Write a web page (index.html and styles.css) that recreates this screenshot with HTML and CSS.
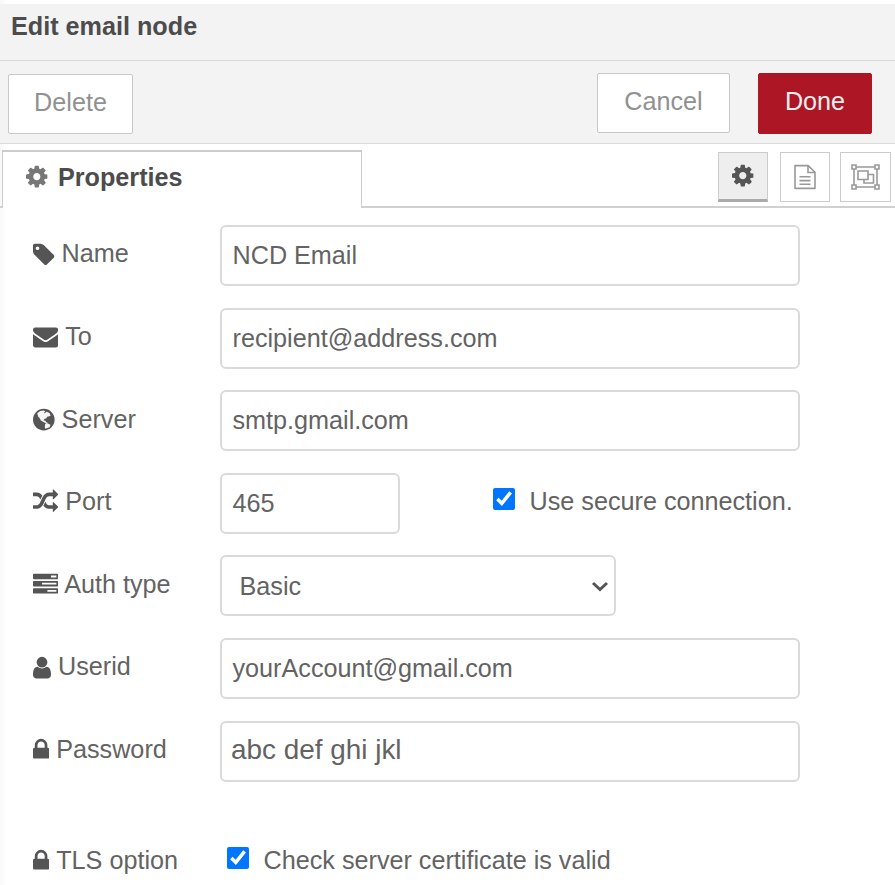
FILE: index.html
```html
<!DOCTYPE html>
<html lang="en">
<head>
<meta charset="utf-8">
<title>Edit email node</title>
<link rel="stylesheet" href="styles.css">
</head>
<body>
<svg class="defs" width="0" height="0">
  <symbol id="cog" viewBox="128 0 1536 1792"><path d="M1152 896q0-106-75-181t-181-75-181 75-75 181 75 181 181 75 181-75 75-181zm512-109v222q0 12-8 23t-20 13l-185 28q-19 54-39 91 35 50 107 138 10 12 10 25t-9 23q-27 37-99 108t-94 71q-12 0-26-9l-138-108q-44 23-91 38-16 136-29 186-7 28-36 28h-222q-14 0-24.500-8.500t-11.500-21.500l-28-184q-49-16-90-37l-141 107q-10 9-25 9-14 0-25-11-126-114-165-168-7-10-7-23 0-12 8-23 15-21 51-66.500t54-70.500q-27-50-41-99l-183-27q-13-2-21-12.500t-8-23.500v-222q0-12 8-23t19-13l186-28q14-46 39-92-40-57-107-138-10-12-10-24 0-10 9-23 26-36 98.500-107.500t94.500-71.500q13 0 26 10l138 107q44-23 91-38 16-136 29-186 7-28 36-28h222q14 0 24.500 8.500t11.500 21.500l28 184q49 16 90 37l142-107q9-9 24-9 13 0 25 10 129 119 165 170 7 8 7 22 0 12-8 23-15 21-51 66.500t-54 70.500q26 50 41 98l183 28q13 2 21 12.500t8 23.500z"/></symbol>
  <symbol id="lock" viewBox="320 0 1152 1792"><path d="M640 768h512v-192q0-106-75-181t-181-75-181 75-75 181v192zm832 96v576q0 40-28 68t-68 28h-960q-40 0-68-28t-28-68v-576q0-40 28-68t68-28h32v-192q0-184 132-316t316-132 316 132 132 316v192h32q40 0 68 28t28 68z"/></symbol>
</svg>
<div class="dialog">
  <header class="title">Edit email node</header>
  <div class="toolbar">
    <span class="btn delete">Delete</span>
    <span class="btn cancel">Cancel</span>
    <span class="btn done">Done</span>
  </div>
  <div class="tabs">
    <div class="tab"><svg class="i15 tab-icon"><use href="#cog"/></svg><span>Properties</span></div>
    <div class="tab-buttons">
      <span class="icon-btn active"><svg class="i15"><use href="#cog"/></svg></span>
      <span class="icon-btn"><svg class="outline" width="22" height="26" viewBox="0 0 22 26"><path d="M1 1.600h13.200l6.800 6.600v16.200h-20z" stroke-linejoin="round"/><path d="M14 2v6.500h7"/><path d="M5.500 12.800h11M5.500 16.600h11M5.500 20.300h11"/></svg></span>
      <span class="icon-btn"><svg class="outline" width="29" height="26" viewBox="0 0 29 26"><path d="M5 3h19M5 23h19M3 5v16M26 5v16"/><path d="M1 1h4v4h-4zM24 1h4v4h-4zM1 21h4v4h-4zM24 21h4v4h-4z"/><path d="M7 7h10v8.500h-10z"/><path d="M17 10.500h5.500v8.500h-9.500v-3.500"/></svg></span>
    </div>
  </div>
  <div class="form">
    <div class="row"><div class="label"><svg class="i15" viewBox="128 0 1536 1792"><path d="M576 448q0-53-37.500-90.500t-90.500-37.500-90.500 37.500-37.500 90.500 37.500 90.500 90.500 37.500 90.500-37.500 37.500-90.500zm1067 576q0 53-37 90l-491 492q-39 37-91 37-53 0-90-37l-715-716q-38-37-64.500-101t-26.500-117v-416q0-52 38-90t90-38h416q53 0 117 26.500t102 64.500l715 714q37 39 37 91z"/></svg>Name</div><div class="field">NCD Email</div></div>
    <div class="row"><div class="label"><svg class="i17" viewBox="0 0 1792 1792"><path d="M1792 710v794q0 66-47 113t-113 47h-1472q-66 0-113-47t-47-113v-794q44 49 101 87 362 246 497 345 57 42 92.500 65.500t94.500 48 110 24.500h2q51 0 110-24.500t94.500-48 92.500-65.500q170-123 498-345 57-39 100-87zm0-294q0 79-49 151t-122 123q-376 261-468 325-10 7-42.500 31t-54 38.500-52 32.500-57.500 27-50 9h-2q-23 0-50-9t-57.500-27-52-32.500-54-38.500-42.500-31q-91-64-262-182.500t-205-142.500q-62-42-117-115.500t-55-136.500q0-78 41.500-130t118.500-52h1472q65 0 112.500 47t47.500 113z"/></svg>To</div><div class="field">recipient@address.com</div></div>
    <div class="row"><div class="label"><svg class="i15" viewBox="128 0 1536 1792"><circle cx="896" cy="896" r="768"/><path class="land" d="M430 450L640 290 900 250 1010 330 900 400 960 450 1090 330 1300 430 1390 600 1240 680 1130 690 1080 800 930 850 880 960 1020 970 1060 1090 1180 1120 1100 1180 900 1090 690 960 580 770 500 700zM1000 1190L1150 1160 1370 1260 1310 1440 1010 1540 960 1400z"/></svg>Server</div><div class="field">smtp.gmail.com</div></div>
    <div class="row"><div class="label"><svg class="i17" viewBox="0 0 1792 1792"><path d="M666 481q-60 92-137 273-22-45-37-72.500t-40.500-63.500-51-56.500-63-35-81.500-14.500h-224q-14 0-23-9t-9-23v-192q0-14 9-23t23-9h224q250 0 410 225zm1126 799q0 14-9 23l-320 320q-9 9-23 9-13 0-22.500-9.500t-9.500-22.500v-192q-32 0-85 .5t-81 1-73-1-71-5-64-10.500-63-18.500-58-28.500-59-40-55-53.500-56-69.500q59-93 136-273 22 45 37 72.500t40.500 63.500 51 56.500 63 35 81.500 14.500h256v-192q0-14 9-23t23-9q12 0 24 10l319 319q9 9 9 23zm0-896q0 14-9 23l-320 320q-9 9-23 9-13 0-22.500-9.500t-9.500-22.500v-192h-256q-48 0-87 15t-69 45-51 61.500-45 77.500q-32 62-78 171-29 66-49.500 111t-54 105-64 100-74 83-90 68.500-106.500 42-128 16.500h-224q-14 0-23-9t-9-23v-192q0-14 9-23t23-9h224q48 0 87-15t69-45 51-61.500 45-77.500q32-62 78-171 29-66 49.500-111t54-105 64-100 74-83 90-68.500 106.500-42 128-16.500h256v-192q0-14 9-23t23-9q12 0 24 10l319 319q9 9 9 23z"/></svg>Port</div><div class="field port">465</div><label class="check secure"><input type="checkbox" checked><span>Use secure connection.</span></label></div>
    <div class="row"><div class="label auth"><svg class="i17" viewBox="0 0 1792 1792"><path d="M1024 1408h640v-128h-640v128zm-384-512h1024v-128h-1024v128zm640-512h384v-128h-384v128zm512 832v256q0 26-19 45t-45 19h-1664q-26 0-45-19t-19-45v-256q0-26 19-45t45-19h1664q26 0 45 19t19 45zm0-512v256q0 26-19 45t-45 19h-1664q-26 0-45-19t-19-45v-256q0-26 19-45t45-19h1664q26 0 45 19t19 45zm0-512v256q0 26-19 45t-45 19h-1664q-26 0-45-19t-19-45v-256q0-26 19-45t45-19h1664q26 0 45 19t19 45z"/></svg>Auth type</div><div class="field select"><span>Basic</span><svg width="18" height="12" viewBox="0 0 18 12"><path class="chevron" d="M2 2l7 6.500 7-6.500"/></svg></div></div>
    <div class="row"><div class="label"><svg class="i12" viewBox="256 0 1280 1792"><path d="M1536 1399q0 109-62.500 187t-150.500 78h-854q-88 0-150.500-78t-62.500-187q0-85 8.500-160.500t31.500-152 58.500-131 94-89 134.500-34.500q131 128 313 128t313-128q76 0 134.500 34.500t94 89 58.500 131 31.500 152 8.500 160.500zm-256-887q0 159-112.500 271.500t-271.500 112.500-271.500-112.500-112.500-271.500 112.500-271.500 271.500-112.500 271.500 112.500 112.500 271.500z"/></svg>Userid</div><div class="field">yourAccount@gmail.com</div></div>
    <div class="row"><div class="label"><svg class="i11"><use href="#lock"/></svg>Password</div><div class="field password">abc def ghi jkl</div></div>
    <div class="row tls"><div class="label"><svg class="i11"><use href="#lock"/></svg>TLS option</div><label class="check"><input type="checkbox" checked><span>Check server certificate is valid</span></label></div>
  </div>
</div>
</body>
</html>
```
FILE: styles.css
```css
* { box-sizing: border-box; }
body {
  margin: 0;
  background: #fff;
  color: #636363;
  font: 25.2px/30px "Liberation Sans", Arial, sans-serif;
  white-space: nowrap;
}
.defs { display: block; }
.dialog {
  height: 885px;
  padding-top: 4px;
  overflow: hidden;
  background: linear-gradient(90deg, #f8f8f8, #fff 6px);
}
svg { fill: #555; flex: none; }
.outline { fill: none; stroke: #999; stroke-width: 1.6px; }
.land { fill: #f4f4f4; }
.chevron { fill: none; stroke: #555; stroke-width: 3px; }
.title {
  height: 57px;
  padding: 7px 11px 0;
  background: #f3f3f3;
  border-bottom: 1px solid #d9d9d9;
  color: #4c4c4c;
  font-weight: bold;
}
.toolbar {
  display: flex;
  align-items: flex-start;
  height: 83px;
  padding: 12px 23px 0 8px;
  background: #f3f3f3;
  border-bottom: 1px solid #dcdcdc;
}
.btn {
  height: 60px;
  border: 1px solid #c8c8c8;
  border-radius: 2px;
  background: #fff;
  color: #919191;
  line-height: 54px;
  text-align: center;
}
.delete { width: 125px; margin: 1px auto 0 0; }
.cancel { width: 133px; margin-right: 28px; }
.done { width: 114px; height: 61px; border-color: #ad1625; background: #ad1625; color: #eee; }
.tabs {
  display: flex;
  justify-content: space-between;
  height: 64px;
  padding: 6px 4px 0 2px;
  background: linear-gradient(#d0d0d0, #d0d0d0) 0 62px / 100% 2px no-repeat;
}
.tab {
  display: flex;
  width: 360px;
  height: 58px;
  padding: 10px 0 0 23px;
  border: solid #ccc;
  border-width: 2px 1px 0;
  background: #fff;
  color: #4c4c4c;
  font-weight: bold;
}
.tab-icon { margin: 2px 10.400px 0 0; fill: #777; }
.tab-buttons { display: flex; gap: 11px; padding-top: 2px; }
.icon-btn {
  display: flex;
  align-items: center;
  justify-content: center;
  width: 50px;
  height: 50px;
  padding-bottom: 1px;
  border: 1px solid #ccc;
}
.icon-btn.active { margin-right: 1px; border-bottom: 3px solid #aaa; background: #eee; padding: 0; }
.icon-btn:last-child { margin-left: -1px; width: 51px; }
.form { padding: 17px 0 0 33px; }
.row { display: flex; height: 82.6px; }
.label { width: 187px; padding-top: 13.400px; flex: none; }
.label svg { margin-right: 7px; vertical-align: -4.400px; }
.label.auth svg { margin-right: 6px; }
.i11 { width: 16.200px; height: 25.200px; }
.i12 { width: 18px; height: 25.200px; }
.i15 { width: 21.600px; height: 25.200px; }
.i17 { width: 25.200px; height: 25.200px; }
.field {
  width: 580px;
  height: 61px;
  padding: 0 10.500px;
  border: 2px solid #dadada;
  border-radius: 6px;
  background: #fff;
  line-height: 57px;
}
.port { width: 180px; }
.select {
  display: flex;
  align-items: center;
  justify-content: space-between;
  width: 396px;
  padding: 2px 5px 0 17.500px;
}
.password { padding-left: 9px; font-size: 27.900px; line-height: 54px; }
.check { display: flex; padding-top: 13.400px; }
.check input { width: 22px; height: 22px; margin: 1.600px 14.500px 0 0; }
.secure { margin-left: 93px; }
.tls { margin-top: 28.600px; }
.tls .check { padding-left: 7px; }
```
